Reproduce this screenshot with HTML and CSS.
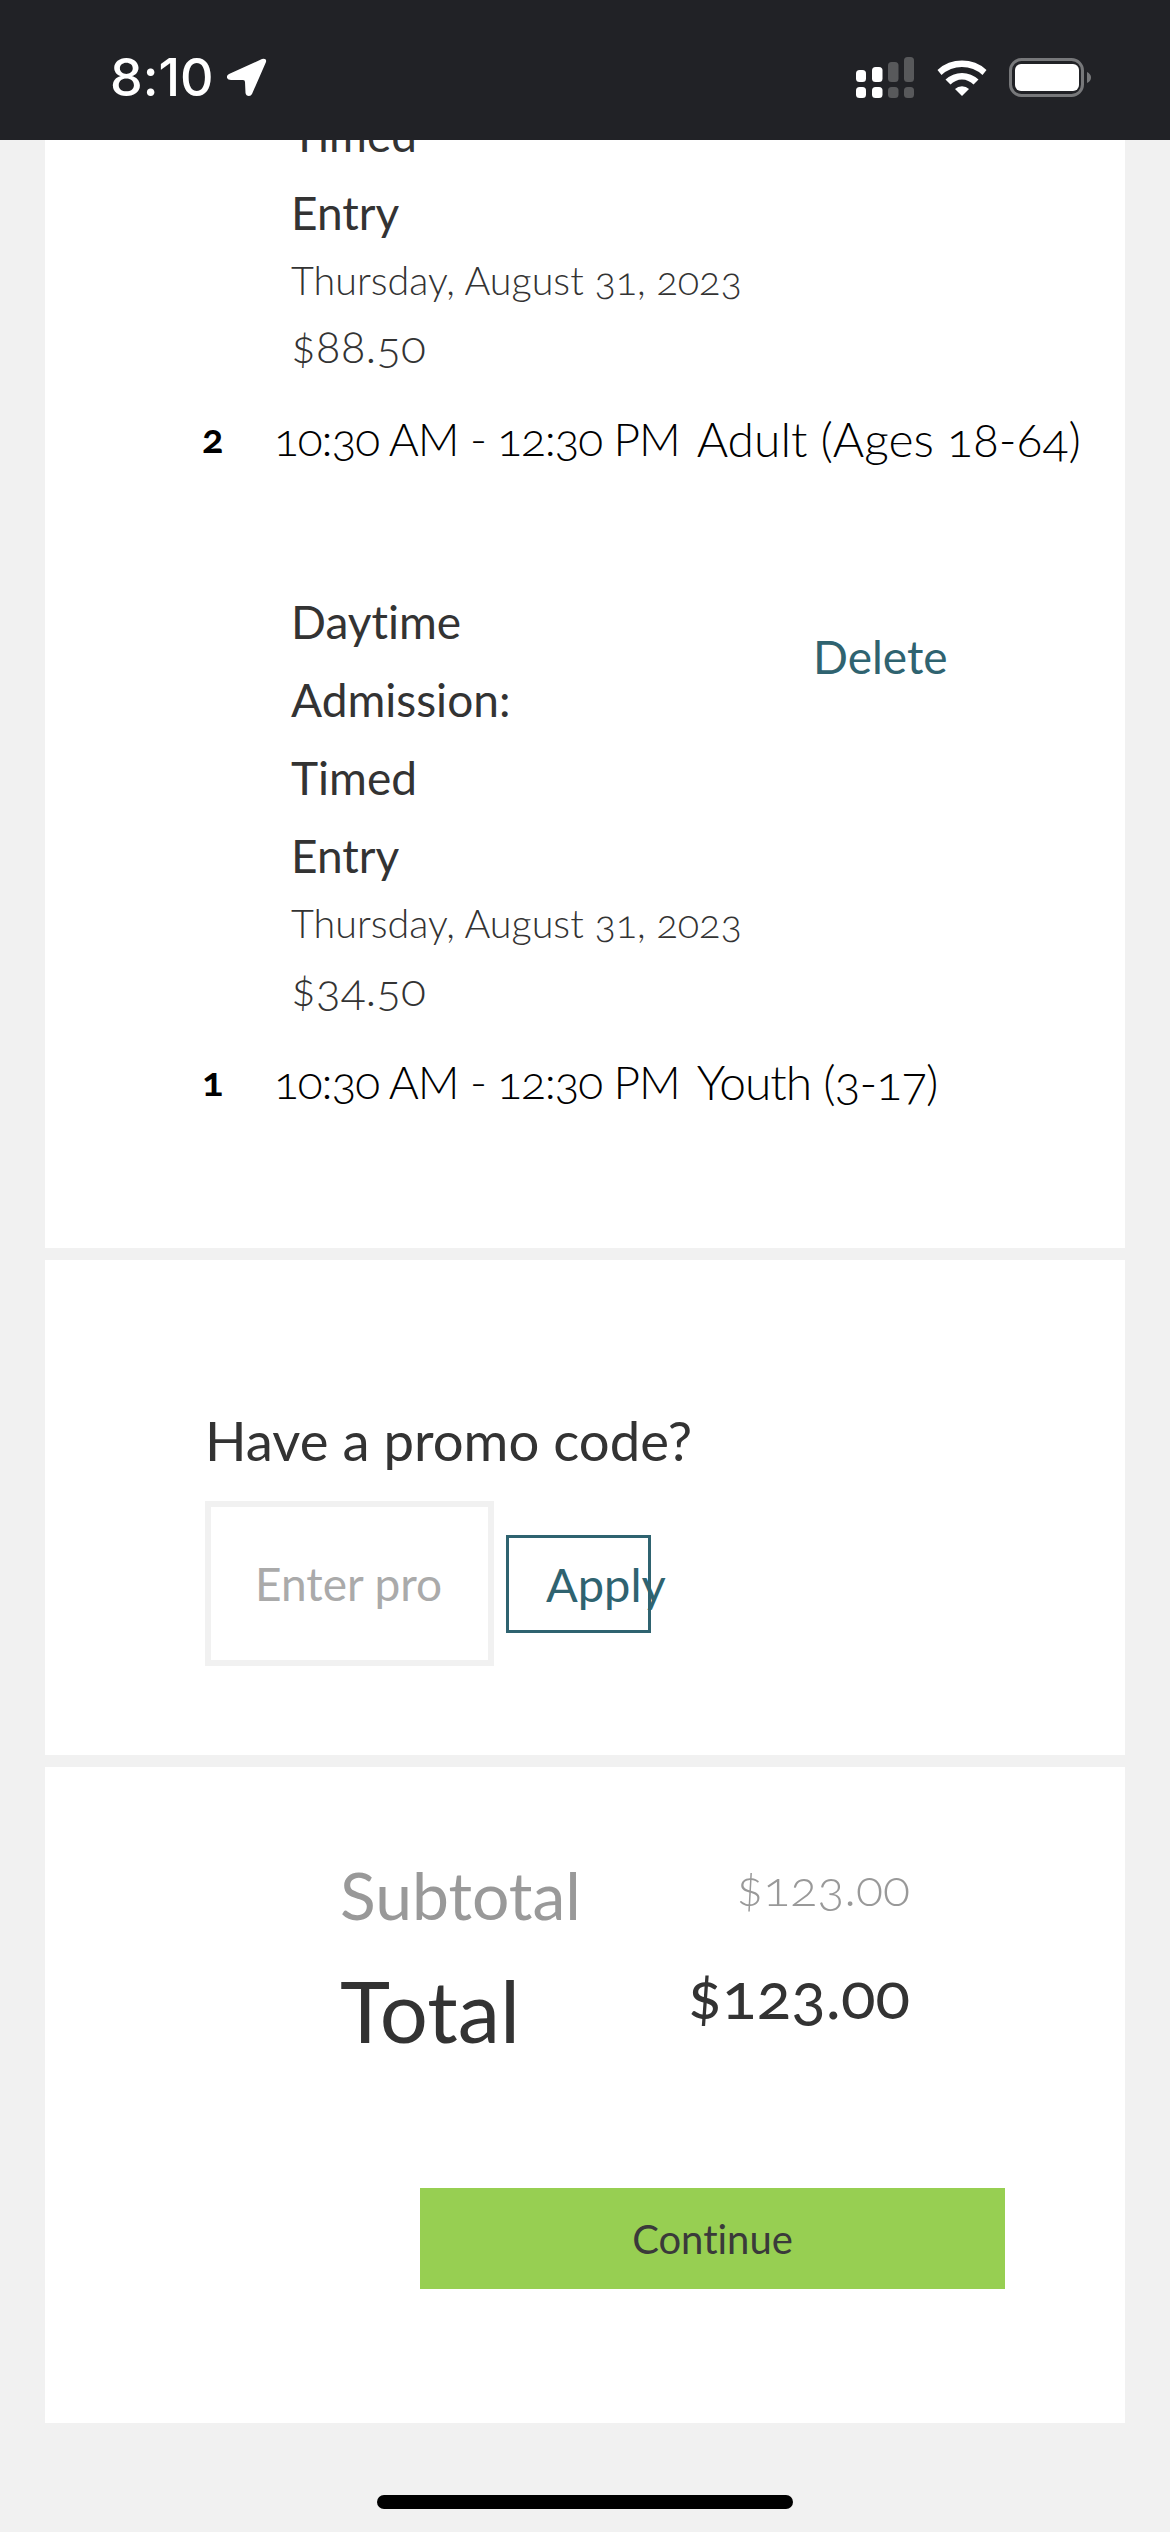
FILE: index.html
```html
<!DOCTYPE html>
<html lang="en">
<head>
    <meta charset="UTF-8">
    <meta name="viewport" content="width=device-width, initial-scale=1.0">
    <title>Checkout</title>
    <link rel="stylesheet" href="styles.css">
</head>
<body>
    <div class="status-bar">
        <div class="status-left">
            <span class="clock">8:10</span>
            <svg class="arrow" width="40" height="39" viewBox="0 0 40 39"><path d="M35 1 L2 16 Q-1 18 0 20 Q1 22 4 22 L16 22 Q18 22 18 24 L18.5 35 Q19 38 22 38 Q24 38 25 36 L39 4 Q40 0 35 1 Z" fill="#fff"/></svg>
        </div>
        <div class="status-right">
            <svg class="signal" width="58" height="41" viewBox="0 0 58 41">
                <rect x="0" y="13" width="10" height="12" rx="3.5" fill="#fff"/>
                <rect x="16" y="10" width="10.5" height="15" rx="3.5" fill="#fff"/>
                <rect x="32" y="5" width="10.5" height="20" rx="3.5" fill="#58595b"/>
                <rect x="48" y="0" width="10" height="25" rx="3.5" fill="#58595b"/>
                <rect x="0" y="30" width="10" height="11" rx="3.5" fill="#fff"/>
                <rect x="16" y="30" width="10.5" height="11" rx="3.5" fill="#fff"/>
                <rect x="32" y="30" width="10.5" height="11" rx="3.5" fill="#58595b"/>
                <rect x="48" y="30" width="10" height="11" rx="3.5" fill="#58595b"/>
            </svg>
            <svg class="wifi" width="50" height="37" viewBox="0 0 50 37">
                <path d="M0.5 11 A36 36 0 0 1 49.5 11 L45.5 16 A30 30 0 0 0 4.5 16 Z" fill="#fff"/>
                <path d="M8.5 20.5 A24 24 0 0 1 41.5 20.5 L36.5 25.5 A16 16 0 0 0 13.5 25.5 Z" fill="#fff"/>
                <path d="M18 30 A10 10 0 0 1 32 30 L25 37 Z" fill="#fff"/>
            </svg>
            <svg class="battery" width="82" height="39" viewBox="0 0 82 39">
                <rect x="1.5" y="1.5" width="72" height="36" rx="11" fill="none" stroke="#77787a" stroke-width="3"/>
                <rect x="6" y="6" width="64" height="27" rx="6" fill="#fff"/>
                <path d="M78 14 Q82 16 82 19.5 Q82 23 78 25 Z" fill="#77787a"/>
            </svg>
        </div>
    </div>

    <div class="page">
        <div class="card card-items">
            <div class="ticket ticket-cut">
                <div class="ticket-info">
                    <div class="ticket-name">Timed<br>Entry</div>
                    <div class="ticket-date">Thursday, August 31, 2023</div>
                    <div class="ticket-price">$88.50</div>
                </div>
            </div>
            <div class="ticket-row">
                <span class="qty">2</span>
                <span class="time">10:30 AM - 12:30 PM</span>
                <span class="type">Adult (Ages 18-64)</span>
            </div>
            <div class="ticket ticket-second">
                <div class="ticket-info">
                    <div class="ticket-name">Daytime<br>Admission:<br>Timed<br>Entry</div>
                    <div class="ticket-date">Thursday, August 31, 2023</div>
                    <div class="ticket-price">$34.50</div>
                </div>
                <a class="delete">Delete</a>
            </div>
            <div class="ticket-row">
                <span class="qty">1</span>
                <span class="time">10:30 AM - 12:30 PM</span>
                <span class="type type-short">Youth (3-17)</span>
            </div>
        </div>

        <div class="card card-promo">
            <div class="promo-title">Have a promo code?</div>
            <div class="promo-form">
                <div class="promo-input"><span class="promo-placeholder">Enter pro</span></div>
                <div class="promo-apply"><span class="promo-apply-text">Apply</span></div>
            </div>
        </div>

        <div class="card card-total">
            <div class="totals">
                <div class="total-row subtotal">
                    <span class="total-label">Subtotal</span>
                    <span class="total-value">$123.00</span>
                </div>
                <div class="total-row total">
                    <span class="total-label">Total</span>
                    <span class="total-value">$123.00</span>
                </div>
            </div>
            <div class="continue">Continue</div>
        </div>
        <div class="home-bar"></div>
    </div>
</body>
</html>
```

FILE: styles.css
```css
html, body {
    margin: 0;
    height: 2532px;
    overflow: hidden;
}
body {
    font-family: Lato, "Open Sans", sans-serif;
    font-variant-numeric: oldstyle-nums;
    font-variant-ligatures: none;
    background-color: #f1f1f1;
    color: #333;
}
.status-bar {
    height: 140px;
    background-color: #212226;
    display: flex;
    justify-content: space-between;
    align-items: center;
    padding: 15px 79px 0 110px;
    box-sizing: border-box;
    position: relative;
    z-index: 2;
}
.status-left, .status-right {
    display: flex;
    align-items: center;
}
.clock {
    font-family: Inter, sans-serif;
    font-variant-numeric: lining-nums;
    font-size: 52px;
    font-weight: 500;
    color: #fff;
}
.arrow {
    margin-left: 13px;
}
.signal {
    margin-right: 23px;
}
.wifi {
    margin-right: 22px;
}
.page {
    padding: 0 45px;
}
.card {
    background-color: #fff;
    margin-bottom: 12px;
    overflow: hidden;
}
.card-items {
    height: 1108px;
}
.ticket {
    display: flex;
    padding-left: 246px;
}
.ticket-cut {
    margin-top: -44px;
}
.ticket-second {
    margin-top: 86px;
}
.ticket-info {
    width: 478px;
}
.ticket-name {
    font-size: 46px;
    line-height: 78px;
}
.ticket-date {
    font-size: 39.5px;
    font-weight: 300;
    line-height: 66px;
    margin-top: -5px;
}
.ticket-price {
    font-size: 46px;
    font-weight: 300;
    line-height: 66px;
}
.delete {
    color: #2f6370;
    font-size: 46px;
    line-height: 78px;
    margin-left: 44px;
    padding-top: 35px;
}
.ticket-row {
    display: flex;
    align-items: center;
    height: 118px;
    font-size: 46px;
    font-weight: 300;
}
.qty {
    width: 229px;
    padding-left: 157px;
    box-sizing: border-box;
    font-size: 40px;
    font-weight: 700;
    color: #000;
}
.time {
    margin-right: 17px;
    color: #000;
    letter-spacing: -1.1px;
}
.type {
    color: #000;
    font-size: 48px;
}
.type-short {
    letter-spacing: -1px;
}
.card-promo {
    height: 495px;
    padding: 140px 0 0 160px;
    box-sizing: border-box;
}
.promo-title {
    font-size: 54.5px;
    line-height: 80px;
}
.promo-form {
    display: flex;
    align-items: center;
    margin-top: 21px;
}
.promo-input {
    width: 289px;
    height: 165px;
    border: 6px solid #f1f1f1;
    box-sizing: border-box;
    display: flex;
    align-items: center;
    padding-left: 44px;
}
.promo-placeholder {
    font-size: 46px;
    color: #aaa;
}
.promo-apply {
    width: 145px;
    height: 98px;
    border: 3px solid #2f6370;
    box-sizing: border-box;
    margin-left: 12px;
    display: flex;
    align-items: center;
    padding-left: 37px;
    white-space: nowrap;
}
.promo-apply-text {
    font-size: 47px;
    color: #2f6370;
}
.card-total {
    height: 656px;
    padding: 82px 0 0 295px;
    box-sizing: border-box;
}
.totals {
    width: 570px;
}
.total-row {
    display: flex;
    justify-content: space-between;
    align-items: center;
}
.subtotal {
    color: #999;
    height: 90px;
    margin-bottom: 16px;
}
.subtotal .total-label {
    font-size: 66px;
}
.subtotal .total-value {
    font-size: 50px;
    font-weight: 300;
    margin-bottom: 14px;
}
.total {
    height: 110px;
}
.total .total-label {
    font-size: 85px;
    font-weight: 400;
}
.total .total-value {
    font-size: 64px;
    margin-bottom: 32px;
}
.continue {
    width: 585px;
    height: 101px;
    margin: 123px 0 0 80px;
    background-color: #97cf52;
    color: #3a3a3a;
    font-size: 40px;
    display: flex;
    align-items: center;
    justify-content: center;
}
.home-bar {
    width: 416px;
    height: 14px;
    border-radius: 7px;
    background-color: #000;
    margin: 72px auto 0;
}
```
